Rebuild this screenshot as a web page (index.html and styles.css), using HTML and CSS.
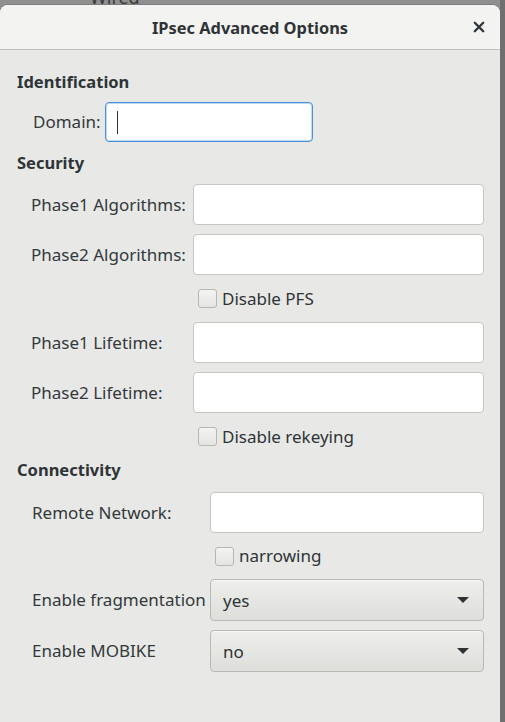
FILE: index.html
```html
<!DOCTYPE html>
<html lang="en">
<head>
<meta charset="utf-8">
<title>IPsec Advanced Options</title>
<link rel="stylesheet" href="styles.css">
</head>
<body>
<div class="screen">
  <div class="backdrop-peek"><span class="peek-text">Wired</span></div>
  <div class="dialog">
    <header class="titlebar">
      <span class="title">IPsec Advanced Options</span>
      <button class="close" aria-label="Close">
        <svg width="12" height="12" viewBox="0 0 12 12"><path d="M1.8 1.8 L10.2 10.2 M10.2 1.8 L1.8 10.2" stroke="#2e3436" stroke-width="2.3" stroke-linecap="round"/></svg>
      </button>
    </header>
    <main class="content">
      <h2 class="heading h-ident">Identification</h2>
      <div class="grid grid-domain">
        <label class="lbl">Domain:</label>
        <div class="entry focused"><span class="caret"></span></div>
      </div>

      <h2 class="heading h-sec">Security</h2>
      <div class="grid grid-sec">
        <label class="lbl">Phase1 Algorithms:</label>
        <div class="entry"></div>
        <label class="lbl">Phase2 Algorithms:</label>
        <div class="entry"></div>
        <span></span>
        <div class="check-row"><span class="checkbox"></span><span class="check-text">Disable PFS</span></div>
        <label class="lbl">Phase1 Lifetime:</label>
        <div class="entry"></div>
        <label class="lbl">Phase2 Lifetime:</label>
        <div class="entry"></div>
        <span></span>
        <div class="check-row"><span class="checkbox"></span><span class="check-text">Disable rekeying</span></div>
      </div>

      <h2 class="heading h-conn">Connectivity</h2>
      <div class="grid grid-conn">
        <label class="lbl">Remote Network:</label>
        <div class="entry"></div>
        <span></span>
        <div class="check-row short"><span class="checkbox"></span><span class="check-text">narrowing</span></div>
        <label class="lbl">Enable fragmentation</label>
        <div class="combo"><span>yes</span><span class="arrow"></span></div>
        <label class="lbl">Enable MOBIKE</label>
        <div class="combo"><span>no</span><span class="arrow"></span></div>
      </div>
    </main>
  </div>
  <div class="side-strip"></div>
</div>
</body>
</html>
```

FILE: styles.css
```css
* { box-sizing: border-box; }
html, body { margin: 0; padding: 0; }
body {
  width: 505px;
  height: 722px;
  overflow: hidden;
  background: #8d8d8d;
  font-family: "Noto Sans", "DejaVu Sans", sans-serif;
  color: #2e3436;
}
.screen {
  position: relative;
  width: 505px;
  height: 722px;
  overflow: hidden;
  background: #8f8f8f;
}
.backdrop-peek {
  height: 5px;
  overflow: hidden;
  padding-left: 90px;
}
.peek-text {
  display: block;
  font-size: 18px;
  line-height: 18px;
  margin-top: -12px;
  color: #3a3a3a;
}
.dialog {
  width: 500px;
  height: 717px;
  background: #e8e8e7;
  border-radius: 8px 8px 0 0;
  display: flex;
  flex-direction: column;
  box-shadow: 0 0 0 1px rgba(0,0,0,0.12);
}
.titlebar {
  height: 45px;
  flex: none;
  background: #f3f3f2;
  border-bottom: 1px solid #bfbfbc;
  border-radius: 8px 8px 0 0;
  display: flex;
  align-items: center;
  justify-content: center;
  position: relative;
}
.title {
  font-weight: bold;
  font-size: 16.4px;
  color: #2e3436;
}
.close {
  position: absolute;
  right: 15px;
  top: 16px;
  width: 12px;
  height: 12px;
  padding: 0;
  border: 0;
  background: none;
  display: block;
}
.close svg { display: block; }
.content {
  padding: 21px 16px 0 17px;
  display: flex;
  flex-direction: column;
}
.heading {
  margin: 0;
  font-size: 16.5px;
  font-weight: bold;
  line-height: 22px;
  height: 22px;
}
.h-ident { margin-bottom: 9px; }
.h-sec { margin-top: 10px; margin-bottom: 10px; }
.h-conn { margin-top: 8px; margin-bottom: 11px; }
.grid {
  display: grid;
  row-gap: 9px;
  align-items: center;
}
.grid-domain {
  margin-left: 16px;
  grid-template-columns: 63px 208px;
  column-gap: 9px;
}
.grid-sec {
  margin-left: 14px;
  grid-template-columns: 154px 1fr;
  column-gap: 8px;
}
.grid-conn {
  margin-left: 15px;
  grid-template-columns: 169px 1fr;
  column-gap: 9px;
}
.lbl {
  font-size: 17px;
  white-space: nowrap;
  line-height: 20px;
  color: #33393b;
}
.entry {
  height: 41px;
  background: #ffffff;
  border: 1px solid #c8c6c1;
  border-radius: 4px;
  display: flex;
  align-items: center;
  padding-left: 11px;
}
.entry.focused {
  height: 40px;
  border: 1px solid #4a90d9;
  box-shadow: inset 0 0 0 1px rgba(74,144,217,0.35);
}
.caret {
  width: 1px;
  height: 23px;
  background: #2e3436;
}
.check-row {
  height: 29px;
  display: flex;
  align-items: center;
  padding-left: 5px;
  gap: 5px;
}
.check-row.short { height: 28px; }
.checkbox {
  width: 19px;
  height: 19px;
  border: 1px solid #b6b6b3;
  border-radius: 3px;
  background: linear-gradient(#f4f4f3, #e4e4e2);
  flex: none;
}
.check-text {
  font-size: 17px;
  line-height: 20px;
}
.combo {
  height: 42px;
  border: 1px solid #b8b8b4;
  border-radius: 4px;
  background: linear-gradient(#eeeeec, #dededb);
  box-shadow: inset 0 1px #f8f8f7;
  display: flex;
  align-items: center;
  justify-content: space-between;
  padding: 0 14px 0 12px;
  font-size: 17px;
}
.arrow {
  width: 0;
  height: 0;
  border-left: 6px solid transparent;
  border-right: 6px solid transparent;
  border-top: 6px solid #2e3436;
}
.side-strip {
  position: absolute;
  top: 0;
  right: 0;
  width: 5px;
  height: 722px;
  background: #6f6f6f;
}
```
